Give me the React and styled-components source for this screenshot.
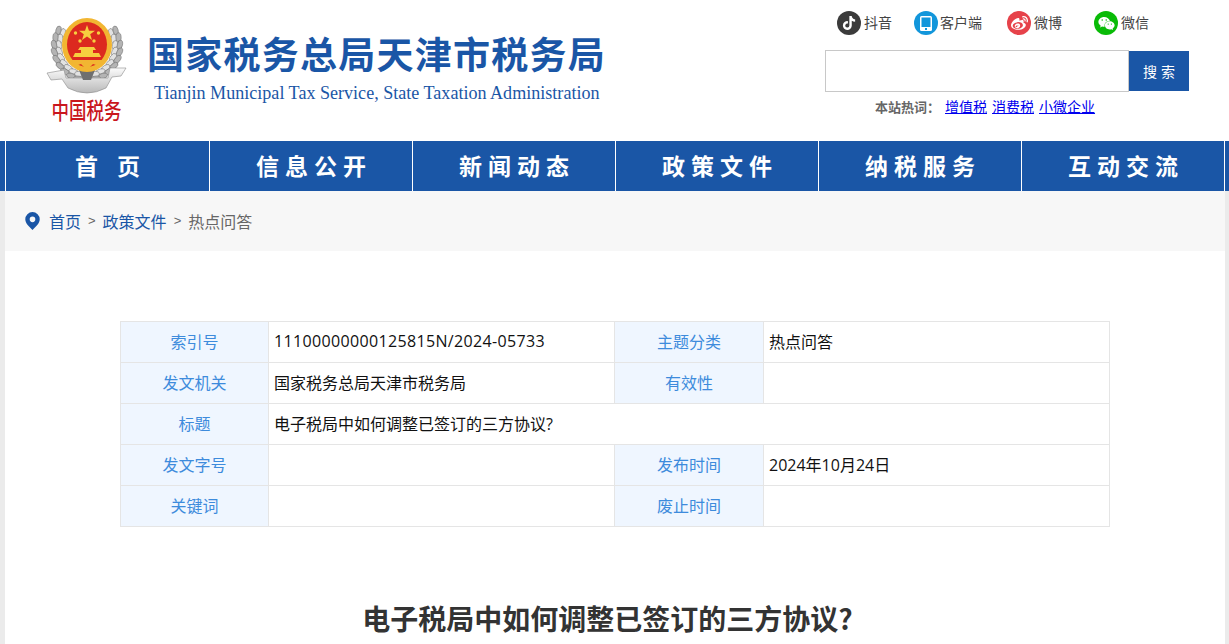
import React from 'react';
import styled, { createGlobalStyle } from 'styled-components';
import { FaTiktok, FaWeibo, FaWeixin } from 'react-icons/fa';

const CJK = `"Noto Sans CJK SC", "Liberation Sans", sans-serif`;
const BLUE = '#1a56a6';

const GlobalStyle = createGlobalStyle`
  html, body {
    margin: 0;
    padding: 0;
    background: #ebebeb;
    font-family: ${CJK};
  }
`;

const Page = styled.div`
  width: 1229px;
  height: 644px;
  overflow: hidden;
`;

const Header = styled.header`
  height: 141px;
  background: #fff;
  display: flex;
  justify-content: space-between;
  padding: 0 40px 0 46px;
  box-sizing: border-box;
`;

const Brand = styled.div`
  display: flex;
  gap: 21px;
`;

const LogoColumn = styled.div`
  width: 81px;
  display: flex;
  flex-direction: column;
  align-items: center;
  padding-top: 18px;
`;

const LogoSeal = styled.div`
  margin-top: 1px;
  width: 70px;
  height: 26px;
  line-height: 26px;
  font-size: 17.5px;
  font-weight: 500;
  color: #c9161d;
  text-align: center;
  white-space: nowrap;
  transform: scaleY(1.3);
`;

const BrandText = styled.div`
  padding-top: 28px;
  margin-left: -1px;
`;

const BrandTitle = styled.div`
  font-size: 37px;
  line-height: 50px;
  font-weight: 700;
  letter-spacing: 1.25px;
  color: ${BLUE};
  white-space: nowrap;
`;

const BrandSub = styled.div`
  margin: 3px 0 0 7px;
  font-family: "Liberation Serif", serif;
  font-size: 18.08px;
  line-height: 24px;
  color: ${BLUE};
  white-space: nowrap;
`;

const Tools = styled.div`
  width: 364px;
  display: flex;
  flex-direction: column;
`;

const Socials = styled.div`
  display: flex;
  padding: 11px 0 0 12px;
  height: 50px;
  box-sizing: border-box;
`;

const Social = styled.a`
  display: flex;
  align-items: center;
  height: 24px;
  margin-right: ${p => p.$gap}px;
  font-size: 14px;
  color: #444;
  white-space: nowrap;
`;

const SocialBadge = styled.span`
  width: 24px;
  height: 24px;
  margin-right: ${p => p.$space}px;
  border-radius: 50%;
  background: ${p => p.$color};
  color: #fff;
  display: flex;
  align-items: center;
  justify-content: center;
  font-size: ${p => p.$size}px;
`;

const SocialLabel = styled.span`
  margin-bottom: 3px;
`;

const SearchRow = styled.div`
  display: flex;
  align-items: center;
`;

const SearchInput = styled.input`
  width: 304px;
  height: 42px;
  box-sizing: border-box;
  border: 1px solid #c8c8c8;
  outline: none;
  background: #fff;
`;

const SearchButton = styled.button`
  width: 60px;
  height: 40px;
  border: 0;
  padding: 0 0 0 4px;
  background: ${BLUE};
  color: #fff;
  font-family: ${CJK};
  font-size: 14px;
  letter-spacing: 4px;
`;

const Hot = styled.div`
  margin-top: 4px;
  padding-left: 50px;
  font-size: 14px;
  line-height: 20px;
  color: #666;
  white-space: nowrap;
`;

const HotLabel = styled.b`
  font-size: 13px;
  margin-right: 5px;
`;

const HotLink = styled.a`
  color: #00e;
  text-decoration: underline;
  margin-right: 5px;
`;

const Nav = styled.nav`
  height: 50px;
  background: ${BLUE};
  display: flex;
  padding-left: 5px;
`;

const NavItem = styled.a`
  width: 203px;
  height: 50px;
  box-sizing: border-box;
  border-left: 1px solid #fff;
  padding-left: 6px;
  &:first-child { width: 204px; }
  &:last-child { width: 204px; border-right: 1px solid #fff; }
  color: #fff;
  font-size: 23px;
  font-weight: 700;
  letter-spacing: 6px;
  word-spacing: 2px;
  line-height: 48px;
  text-align: center;
  white-space: pre;
`;

const Main = styled.main`
  margin: 0 4px 0 5px;
  background: #fff;
  height: 453px;
`;

const Crumbs = styled.div`
  height: 60px;
  box-sizing: border-box;
  background: #f7f7f7;
  display: flex;
  align-items: center;
  padding: 0 0 1px 20px;
  font-size: 16px;
  color: #666;
`;

const CrumbPin = styled.svg`
  width: 15px;
  height: 18px;
  margin-right: 9px;
`;

const CrumbLink = styled.a`
  color: ${BLUE};
`;

const CrumbArrow = styled.span`
  margin: 0 7px 0 7px;
  font-family: "Liberation Sans", sans-serif;
  font-size: 13px;
`;

const MetaTable = styled.table`
  width: 989px;
  margin: 70px 0 0 115px;
  border-collapse: collapse;
  table-layout: fixed;
  font-size: 16px;
  font-family: "Open Sans", ${CJK};
`;

const MetaRow = styled.tr`
  height: 41px;
`;

const MetaLabel = styled.td`
  box-sizing: border-box;
  border: 1px solid #e5e5e5;
  background: #eff6ff;
  color: #3d8bdc;
  text-align: center;
  padding: 0 0 2px;
`;

const MetaValue = styled.td`
  border: 1px solid #e5e5e5;
  color: #111;
  padding: 0 5px 2px;
`;

const DocNumber = styled.span`
  letter-spacing: 0.35px;
`;

const ArticleTitle = styled.h1`
  margin: 71px 15px 0 0;
  font-size: 28px;
  line-height: 40px;
  font-weight: 700;
  color: #333;
  text-align: center;
`;

// two rows of wheat grains following the ring on each side
const grains = () => {
  const out = [];
  [28, 33].forEach((radius, row) => {
    for (let i = 0; i < 9; i++) {
      const deg = -30 + i * 13;
      const a = (deg * Math.PI) / 180;
      const dx = Math.cos(a) * radius;
      const y = 29 + Math.sin(a) * radius;
      out.push({ x: 41 - dx, y, r: -(deg + 15), k: `l${row}${i}`, row });
      out.push({ x: 41 + dx, y, r: deg + 15, k: `r${row}${i}`, row });
    }
  });
  return out;
};

const Emblem = () => (
  <svg width="81" height="78" viewBox="0 0 81 78">
    <defs>
      <linearGradient id="silver" x1="0" y1="0" x2="0" y2="1">
        <stop offset="0" stopColor="#fbfbfb" />
        <stop offset="1" stopColor="#b9b9b9" />
      </linearGradient>
    </defs>
    {grains().map(g => (
      <ellipse key={g.k} cx={g.x} cy={g.y} rx="2.6" ry="4.6" fill={g.row ? '#b4b4b4' : '#e2e2e2'} stroke="#666" strokeWidth=".5" transform={`rotate(${g.r} ${g.x} ${g.y})`} />
    ))}
    <path d="M1 55 L18 52 L20 60 L62 60 L64 50 L80 50 L75 58 L66 59 L60 70 Q41 80 22 70 L16 61 L5 62 Z" fill="url(#silver)" stroke="#8a8a8a" strokeWidth=".6" />
    <path d="M33 52 L49 52 L45 62 L37 62 Z" fill="#6f6f6f" />
    <ellipse cx="41" cy="27" rx="25" ry="27" fill="#f2b632" />
    <ellipse cx="41" cy="26.500" rx="20" ry="22.500" fill="#dc2a1f" />
    <polygon points="41,7 43,12.700 49,12.700 44.200,16.300 46,22 41,18.500 36,22 37.800,16.300 33,12.700 39,12.700" fill="#f6cf3f" />
    <circle cx="29.500" cy="15" r="1.700" fill="#f6cf3f" />
    <circle cx="52.500" cy="15" r="1.700" fill="#f6cf3f" />
    <circle cx="34" cy="23" r="1.700" fill="#f6cf3f" />
    <circle cx="48" cy="23" r="1.700" fill="#f6cf3f" />
    <path d="M34 29 L48 29 L50 32 L47 32 L47 35 L53 35 L55 39 L27 39 L29 35 L35 35 L35 32 L32 32 Z" fill="#f6cf3f" />
    <path d="M25 42 L57 42 L53 48 L47 46 L41 52 L35 46 L29 48 Z" fill="#f2b632" />
  </svg>
);

const SOCIALS = [
  { label: '抖音', color: '#3b3b3b', gap: 22, space: 3, size: 14, icon: <FaTiktok /> },
  {
    label: '客户端', color: '#1296db', gap: 25, space: 2, size: 14,
    icon: (
      <svg width="12" height="15" viewBox="0 0 12 15">
        <rect width="12" height="15" rx="1.500" fill="#fff" />
        <rect x="1.500" y="1.500" width="9" height="9.500" fill="#1296db" />
        <rect x="5" y="12" width="2" height="2" fill="#1296db" />
      </svg>
    ),
  },
  { label: '微博', color: '#e6424a', gap: 32, space: 3, size: 17, icon: <FaWeibo /> },
  { label: '微信', color: '#09bb07', gap: 0, space: 3, size: 17, icon: <FaWeixin /> },
];

const NAV = ['首 页', '信息公开', '新闻动态', '政策文件', '纳税服务', '互动交流'];

export default function App() {
  return (
    <Page>
      <GlobalStyle />
      <Header>
        <Brand>
          <LogoColumn>
            <Emblem />
            <LogoSeal>中国税务</LogoSeal>
          </LogoColumn>
          <BrandText>
            <BrandTitle>国家税务总局天津市税务局</BrandTitle>
            <BrandSub>Tianjin Municipal Tax Service, State Taxation Administration</BrandSub>
          </BrandText>
        </Brand>
        <Tools>
          <Socials>
            {SOCIALS.map(s => (
              <Social key={s.label} $gap={s.gap}>
                <SocialBadge $color={s.color} $space={s.space} $size={s.size}>{s.icon}</SocialBadge>
                <SocialLabel>{s.label}</SocialLabel>
              </Social>
            ))}
          </Socials>
          <SearchRow>
            <SearchInput />
            <SearchButton>搜索</SearchButton>
          </SearchRow>
          <Hot>
            <HotLabel>{'本站热词\uFF1A'}</HotLabel>
            <HotLink>增值税</HotLink>
            <HotLink>消费税</HotLink>
            <HotLink>小微企业</HotLink>
          </Hot>
        </Tools>
      </Header>
      <Nav>
        {NAV.map(n => <NavItem key={n}>{n}</NavItem>)}
      </Nav>
      <Main>
        <Crumbs>
          <CrumbPin viewBox="0 0 16 19">
            <path fillRule="evenodd" fill={BLUE} d="M8 0a7.7 7.7 0 0 1 7.7 7.7c0 4.3-4.4 8.3-7.7 11.3C4.700 16 .3 12 .3 7.700A7.7 7.700 0 0 1 8 0Zm0 4.700a3 3 0 1 0 0 6 3 3 0 0 0 0-6Z" />
          </CrumbPin>
          <CrumbLink>首页</CrumbLink>
          <CrumbArrow>&gt;</CrumbArrow>
          <CrumbLink>政策文件</CrumbLink>
          <CrumbArrow>&gt;</CrumbArrow>
          <span>热点问答</span>
        </Crumbs>
        <MetaTable>
          <colgroup>
            <col width="148" /><col width="346" /><col width="149" /><col width="346" />
          </colgroup>
          <tbody>
            <MetaRow>
              <MetaLabel>索引号</MetaLabel>
              <MetaValue><DocNumber>11100000000125815N/2024-05733</DocNumber></MetaValue>
              <MetaLabel>主题分类</MetaLabel>
              <MetaValue>热点问答</MetaValue>
            </MetaRow>
            <MetaRow>
              <MetaLabel>发文机关</MetaLabel>
              <MetaValue>国家税务总局天津市税务局</MetaValue>
              <MetaLabel>有效性</MetaLabel>
              <MetaValue />
            </MetaRow>
            <MetaRow>
              <MetaLabel>标题</MetaLabel>
              <MetaValue colSpan={3}>电子税局中如何调整已签订的三方协议?</MetaValue>
            </MetaRow>
            <MetaRow>
              <MetaLabel>发文字号</MetaLabel>
              <MetaValue />
              <MetaLabel>发布时间</MetaLabel>
              <MetaValue>2024年10月24日</MetaValue>
            </MetaRow>
            <MetaRow>
              <MetaLabel>关键词</MetaLabel>
              <MetaValue />
              <MetaLabel>废止时间</MetaLabel>
              <MetaValue />
            </MetaRow>
          </tbody>
        </MetaTable>
        <ArticleTitle>电子税局中如何调整已签订的三方协议?</ArticleTitle>
      </Main>
    </Page>
  );
}
